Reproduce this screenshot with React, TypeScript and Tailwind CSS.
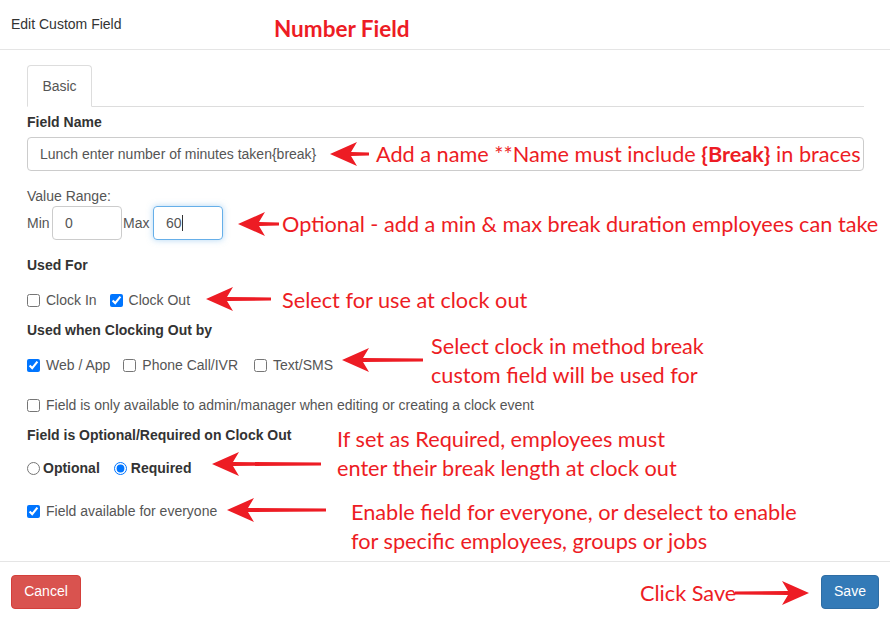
import React from 'react';

const UI_FONT = { fontFamily: '"Liberation Sans", Arial, sans-serif' };
const NOTE_FONT = { fontFamily: 'Lato, "Open Sans", sans-serif' };

type ArrowProps = { left: number; top: number; width: number; dir?: 'left' | 'right' };

// red annotation arrow, tip at the left (or right) end
function Arrow({ left, top, width, dir = 'left' }: ArrowProps) {
  const w = width;
  const d = `M0 13 L27 1 L21 11 L${w} 11.5 L${w} 14.5 L21 15 L27 25 Z`;
  return (
    <svg
      className="absolute"
      style={{ left, top }}
      width={w}
      height={26}
      viewBox={`0 0 ${w} 26`}
    >
      <path d={d} fill="#ed1c24" transform={dir === 'right' ? `translate(${w} 0) scale(-1 1)` : undefined} />
    </svg>
  );
}

function Note({ left, top, children }: { left: number; top: number; children: React.ReactNode }) {
  return (
    <div
      className="absolute text-[21.7px] leading-[29px] text-[#ed1c24] whitespace-nowrap"
      style={{ left, top, ...NOTE_FONT }}
    >
      {children}
    </div>
  );
}

function Check({ label, checked, className = '' }: { label: string; checked?: boolean; className?: string }) {
  return (
    <label className={`flex items-center gap-[6px] ${className}`}>
      <input type="checkbox" defaultChecked={checked} className="m-0 w-[13px] h-[13px]" />
      <span>{label}</span>
    </label>
  );
}

export default function App() {
  return (
    <div className="relative w-[890px] h-[621px] bg-white text-[14px] text-[#333] overflow-hidden" style={UI_FONT}>
      {/* header */}
      <div className="h-[50px] border-b border-[#e5e5e5] flex items-center px-[11px] text-[#333]">
        Edit Custom Field
      </div>

      {/* body */}
      <div className="h-[511px] pl-[27px] pr-[26px] pt-[15px]">
        <div className="flex border-b border-[#ddd] h-[42px]">
          <div className="w-[65px] h-[42px] -mb-px border border-[#ddd] border-b-white rounded-t bg-white flex items-center justify-center text-[#555]">
            Basic
          </div>
        </div>

        <div className="mt-[7px] h-[16px] leading-[16px] font-bold">Field Name</div>
        <div className="mt-[7px] h-[34px] border border-[#ccc] rounded flex items-center px-[12px] text-[#555]">
          Lunch enter number of minutes taken{'{break}'}
        </div>

        <div className="mt-[17px] h-[16px] leading-[16px] text-[#555]">Value Range:</div>
        <div className="mt-[2px] h-[34px] flex items-center text-[#555]">
          <span className="w-[25px]">Min</span>
          <div className="w-[70px] h-[34px] border border-[#ccc] rounded flex items-center px-[12px]">0</div>
          <span className="ml-[1px] w-[30px]">Max</span>
          <div className="w-[70px] h-[34px] border border-[#66afe9] rounded flex items-center px-[12px] shadow-[0_0_6px_rgba(102,175,233,0.5)]">
            60<span className="w-px h-[16px] bg-[#333]" />
          </div>
        </div>

        <div className="mt-[17px] h-[16px] leading-[16px] font-bold">Used For</div>
        <div className="mt-[17px] h-[20px] flex items-center text-[#555]">
          <Check label="Clock In" />
          <Check label="Clock Out" checked className="ml-[13px]" />
        </div>

        <div className="mt-[12px] h-[16px] leading-[16px] font-bold">Used when Clocking Out by</div>
        <div className="mt-[17px] h-[20px] flex items-center text-[#555]">
          <Check label="Web / App" checked />
          <Check label="Phone Call/IVR" className="ml-[13px]" />
          <Check label="Text/SMS" className="ml-[16px]" />
        </div>

        <div className="mt-[20px] h-[20px] flex items-center text-[#555]">
          <Check label="Field is only available to admin/manager when editing or creating a clock event" />
        </div>

        <div className="mt-[12px] h-[16px] leading-[16px] font-bold">Field is Optional/Required on Clock Out</div>
        <div className="mt-[15px] h-[20px] flex items-center font-bold">
          <label className="flex items-center gap-[3px]">
            <input type="radio" name="req" className="m-0 w-[13px] h-[13px]" />
            <span>Optional</span>
          </label>
          <label className="flex items-center gap-[4px] ml-[14px]">
            <input type="radio" name="req" defaultChecked className="m-0 w-[13px] h-[13px]" />
            <span>Required</span>
          </label>
        </div>

        <div className="mt-[23px] h-[20px] flex items-center text-[#555]">
          <Check label="Field available for everyone" checked />
        </div>
      </div>

      {/* footer */}
      <div className="h-[60px] border-t border-[#e5e5e5] flex items-center justify-between px-[11px]">
        <button className="w-[70px] h-[34px] rounded bg-[#d9534f] border border-[#d43f3a] text-white">Cancel</button>
        <button className="w-[58px] h-[34px] rounded bg-[#337ab7] border border-[#2e6da4] text-white">Save</button>
      </div>

      {/* annotations */}
      <div className="absolute left-[274px] top-[12px] text-[22.5px] font-bold text-[#ed1c24]" style={NOTE_FONT}>
        Number Field
      </div>

      <Arrow left={330} top={141} width={39} />
      <Note left={376} top={140}>
        Add a name **Name must include <b>{'{Break}'}</b> in braces
      </Note>

      <Arrow left={238} top={211} width={41} />
      <Note left={282} top={210}>Optional - add a min &amp; max break duration employees can take</Note>

      <Arrow left={206} top={286} width={65} />
      <Note left={282} top={286}>Select for use at clock out</Note>

      <Arrow left={342} top={347} width={81} />
      <Note left={431} top={332}>
        Select clock in method break
        <br />
        custom field will be used for
      </Note>

      <Arrow left={212} top={451} width={109} />
      <Note left={337} top={425}>
        If set as Required, employees must
        <br />
        enter their break length at clock out
      </Note>

      <Arrow left={227} top={497} width={99} />
      <Note left={351} top={498}>
        Enable field for everyone, or deselect to enable
        <br />
        for specific employees, groups or jobs
      </Note>

      <Note left={640} top={579}>Click Save</Note>
      <Arrow left={735} top={580} width={74} dir="right" />
    </div>
  );
}
